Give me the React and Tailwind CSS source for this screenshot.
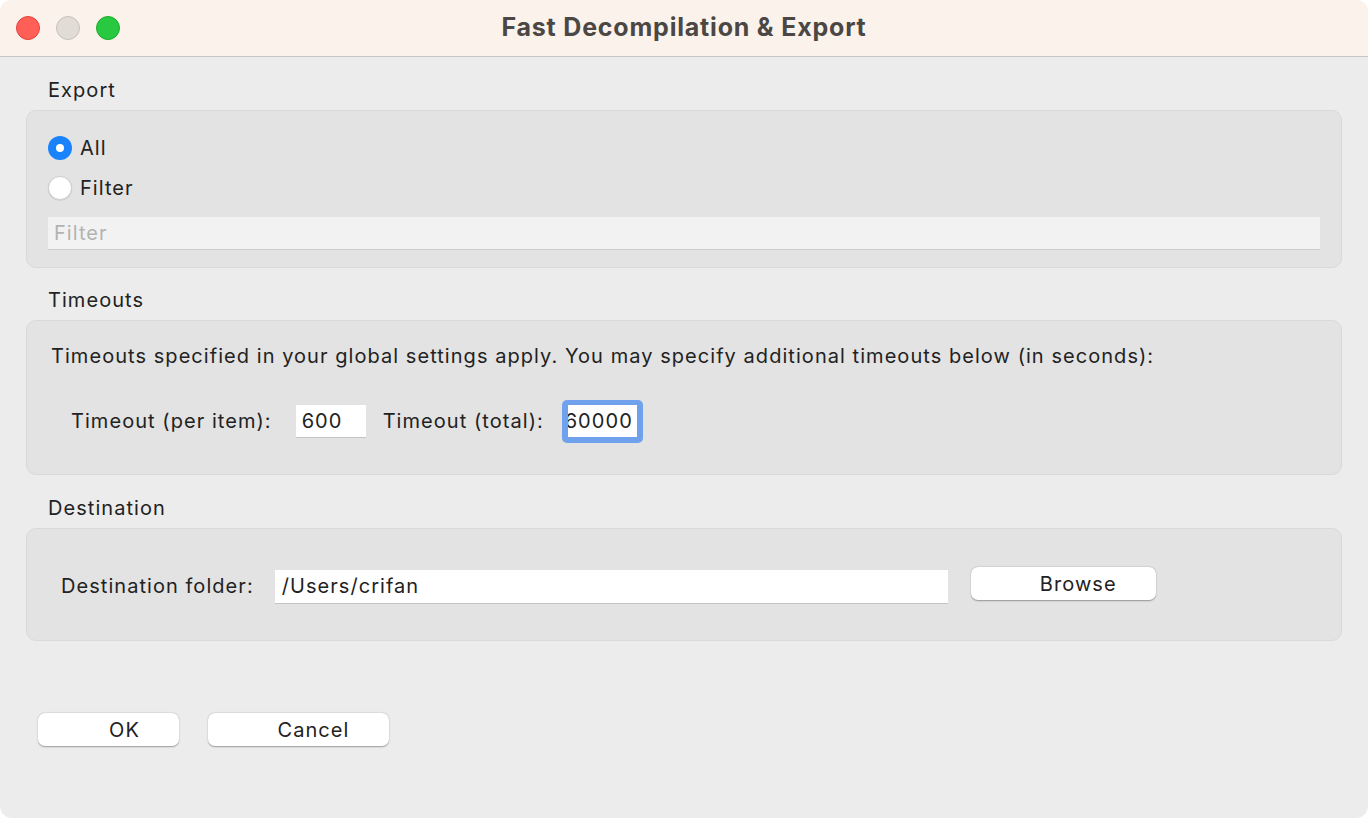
export default function App() {
  const font = { fontFamily: 'Inter, "Noto Sans", sans-serif' };
  return (
    <div className="w-[1368px] h-[818px] bg-white" style={font}>
      <div className="w-full h-full rounded-[12px] overflow-hidden bg-[#ECECEC] flex flex-col">
        {/* Title bar */}
        <div className="h-[57px] shrink-0 bg-[#FBF2EC] border-b border-[#C9C5C2] flex items-center relative">
          <div className="flex items-center gap-[16px] pl-[16px]">
            <div className="w-[24px] h-[24px] rounded-full bg-[#FF5F57] border border-[#E0443E]" />
            <div className="w-[24px] h-[24px] rounded-full bg-[#E2DCD7] border border-[#C8C1BB]" />
            <div className="w-[24px] h-[24px] rounded-full bg-[#28C840] border border-[#1DAD2B]" />
          </div>
          <div className="absolute inset-0 flex items-center justify-center pointer-events-none">
            <span className="text-[25px] font-bold text-[#4B4744] tracking-[0.8px]">Fast Decompilation &amp; Export</span>
          </div>
        </div>

        {/* Body */}
        <div className="flex-1 flex flex-col px-[26px] tracking-[1.05px]">
          {/* Export */}
          <div className="h-[53px] flex items-end pb-[5px] pl-[22px] text-[20px] text-[#222]">Export</div>
          <div className="h-[158px] rounded-[10px] bg-[#E3E3E3] border border-[#D9D9D9] flex flex-col pl-[21px] pr-[21px] pt-[22px]">
            <div className="flex items-center h-[30px]">
              <div className="w-[24px] h-[24px] rounded-full bg-[#1A82FB] flex items-center justify-center">
                <div className="w-[8px] h-[8px] rounded-full bg-white" />
              </div>
              <span className="ml-[8px] text-[20px] text-[#222]">All</span>
            </div>
            <div className="flex items-center h-[30px] mt-[10px]">
              <div className="w-[24px] h-[24px] rounded-full bg-white border border-[#CFCFCF] shadow-[0_0.5px_1px_rgba(0,0,0,0.15)]" />
              <span className="ml-[8px] text-[20px] text-[#222]">Filter</span>
            </div>
            <div className="mt-[14px] h-[33px] bg-[#F2F2F2] border-b border-[#CDCDCD] flex items-center pl-[6px] text-[20px] text-[#B3B3B3]">
              Filter
            </div>
          </div>

          {/* Timeouts */}
          <div className="h-[52px] flex items-end pb-[5px] pl-[22px] text-[20px] text-[#222]">Timeouts</div>
          <div className="h-[155px] rounded-[10px] bg-[#E3E3E3] border border-[#D9D9D9] flex flex-col pl-[24px] pt-[21px]">
            <div className="text-[20px] text-[#222] h-[28px] flex items-center whitespace-nowrap">
              Timeouts specified in your global settings apply. You may specify additional timeouts below (in seconds):
            </div>
            <div className="flex items-center mt-[34px] pl-[20px] h-[34px]">
              <span className="text-[20px] text-[#222]">Timeout (per item):</span>
              <div className="ml-[24px] w-[70px] h-[33px] bg-white border-b border-[#C4C4C4] flex items-center pl-[6px] text-[20px] text-[#222]">600</div>
              <span className="ml-[17px] text-[20px] text-[#222]">Timeout (total):</span>
              <div className="ml-[18px] w-[81px] h-[43px] rounded-[5px] bg-[#6FA1EC] flex items-center justify-center">
                <div className="w-[69px] h-[32px] bg-white overflow-hidden flex items-center justify-end pr-[4px] text-[20px] text-[#222]">
                  <span className="shrink-0">60000</span>
                </div>
              </div>
            </div>
          </div>

          {/* Destination */}
          <div className="h-[53px] flex items-end pb-[5px] pl-[22px] text-[20px] text-[#222]">Destination</div>
          <div className="h-[113px] rounded-[10px] bg-[#E3E3E3] border border-[#D9D9D9] flex items-center pl-[34px]">
            <span className="text-[20px] text-[#222] mt-[2px]">Destination folder:</span>
            <div className="ml-[21px] w-[673px] h-[34px] bg-white border-b border-[#C4C4C4] flex items-center pl-[7px] text-[20px] text-[#222] mt-[4px]">/Users/crifan</div>
            <button className="ml-[23px] w-[185px] h-[33px] rounded-[7px] bg-white shadow-[0_0.5px_1.5px_rgba(0,0,0,0.35)] text-[20px] text-[#222] flex items-center justify-center pl-[30px] -mt-[2px]">Browse</button>
          </div>

          {/* Buttons */}
          <div className="flex items-center mt-[72px] pl-[12px] gap-[29px]">
            <button className="w-[141px] h-[33px] rounded-[7px] bg-white shadow-[0_0.5px_1.5px_rgba(0,0,0,0.35)] text-[20px] text-[#222] flex items-center justify-center pl-[32px]">OK</button>
            <button className="w-[181px] h-[33px] rounded-[7px] bg-white shadow-[0_0.5px_1.5px_rgba(0,0,0,0.35)] text-[20px] text-[#222] flex items-center justify-center pl-[30px]">Cancel</button>
          </div>
        </div>
      </div>
    </div>
  );
}
